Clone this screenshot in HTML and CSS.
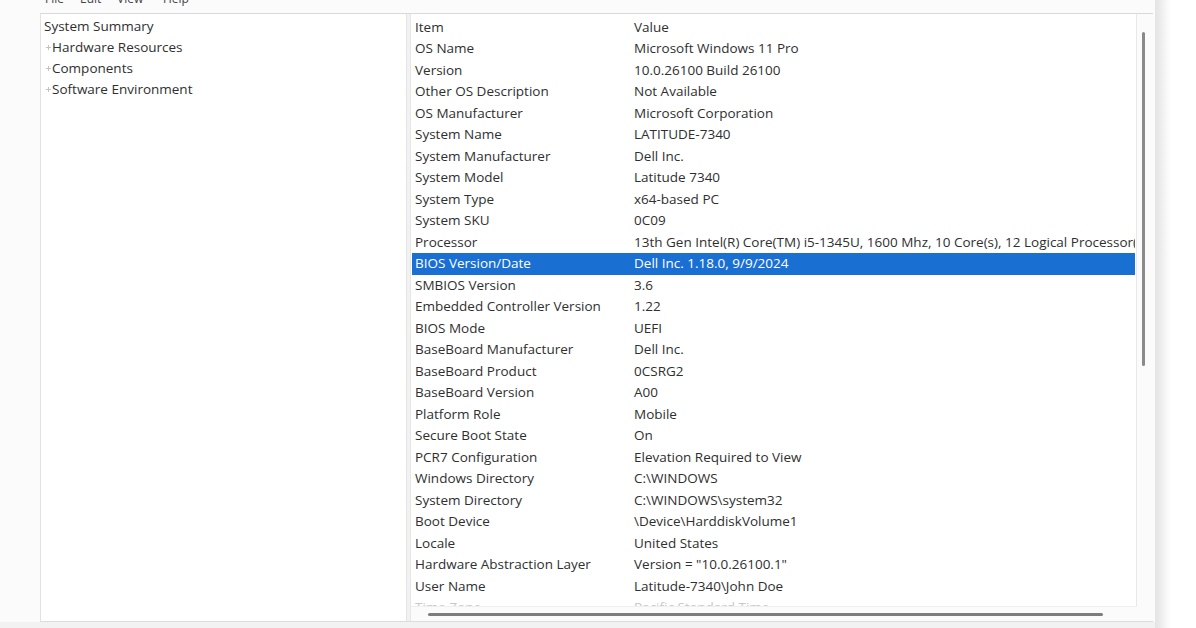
FILE: index.html
```html
<!DOCTYPE html>
<html>
<head>
<meta charset="utf-8">
<link rel="stylesheet" href="styles.css">
</head>
<body>
<div class="screen">
  <div class="window">
    <div class="menubar">
      <span class="menu m-file">File</span>
      <span class="menu m-edit">Edit</span>
      <span class="menu m-view">View</span>
      <span class="menu m-help">Help</span>
    </div>
    <div class="main">
      <div class="tree">
        <div class="node root">System Summary</div>
        <div class="node child"><span class="plus"></span>Hardware Resources</div>
        <div class="node child"><span class="plus"></span>Components</div>
        <div class="node child"><span class="plus"></span>Software Environment</div>
      </div>
      <div class="splitter"></div>
      <div class="list">
        <div class="rows">
          <div class="row"><span class="c1">Item</span><span class="c2">Value</span></div>
          <div class="row"><span class="c1">OS Name</span><span class="c2">Microsoft Windows 11 Pro</span></div>
          <div class="row"><span class="c1">Version</span><span class="c2">10.0.26100 Build 26100</span></div>
          <div class="row"><span class="c1">Other OS Description</span><span class="c2">Not Available</span></div>
          <div class="row"><span class="c1">OS Manufacturer</span><span class="c2">Microsoft Corporation</span></div>
          <div class="row"><span class="c1">System Name</span><span class="c2">LATITUDE-7340</span></div>
          <div class="row"><span class="c1">System Manufacturer</span><span class="c2">Dell Inc.</span></div>
          <div class="row"><span class="c1">System Model</span><span class="c2">Latitude 7340</span></div>
          <div class="row"><span class="c1">System Type</span><span class="c2">x64-based PC</span></div>
          <div class="row"><span class="c1">System SKU</span><span class="c2">0C09</span></div>
          <div class="row"><span class="c1">Processor</span><span class="c2">13th Gen Intel(R) Core(TM) i5-1345U, 1600 Mhz, 10 Core(s), 12 Logical Processor(s)</span></div>
          <div class="row selected"><span class="c1">BIOS Version/Date</span><span class="c2">Dell Inc. 1.18.0, 9/9/2024</span></div>
          <div class="row"><span class="c1">SMBIOS Version</span><span class="c2">3.6</span></div>
          <div class="row"><span class="c1">Embedded Controller Version</span><span class="c2">1.22</span></div>
          <div class="row"><span class="c1">BIOS Mode</span><span class="c2">UEFI</span></div>
          <div class="row"><span class="c1">BaseBoard Manufacturer</span><span class="c2">Dell Inc.</span></div>
          <div class="row"><span class="c1">BaseBoard Product</span><span class="c2">0CSRG2</span></div>
          <div class="row"><span class="c1">BaseBoard Version</span><span class="c2">A00</span></div>
          <div class="row"><span class="c1">Platform Role</span><span class="c2">Mobile</span></div>
          <div class="row"><span class="c1">Secure Boot State</span><span class="c2">On</span></div>
          <div class="row"><span class="c1">PCR7 Configuration</span><span class="c2">Elevation Required to View</span></div>
          <div class="row"><span class="c1">Windows Directory</span><span class="c2">C:\WINDOWS</span></div>
          <div class="row"><span class="c1">System Directory</span><span class="c2">C:\WINDOWS\system32</span></div>
          <div class="row"><span class="c1">Boot Device</span><span class="c2">\Device\HarddiskVolume1</span></div>
          <div class="row"><span class="c1">Locale</span><span class="c2">United States</span></div>
          <div class="row"><span class="c1">Hardware Abstraction Layer</span><span class="c2">Version = "10.0.26100.1"</span></div>
          <div class="row"><span class="c1">User Name</span><span class="c2">Latitude-7340\John Doe</span></div>
          <div class="row faint"><span class="c1">Time Zone</span><span class="c2">Pacific Standard Time</span></div>
        </div>
        <div class="vscroll"><div class="vthumb"></div></div>
        <div class="hscroll"><div class="hthumb"></div></div>
        <div class="corner"></div>
      </div>
    </div>
    <div class="statusbar"></div>
  </div>
  <div class="edge"></div>
</div>
</body>
</html>
```

FILE: styles.css
```css
html, body {
  margin: 0;
  padding: 0;
  background: #ffffff;
}
body {
  font-family: "Open Sans", "Noto Sans", "Liberation Sans", sans-serif;
  font-size: 13.5px;
  color: #2f2f2f;
  width: 1196px;
  height: 628px;
  overflow: hidden;
}
.screen {
  display: flex;
  height: 628px;
}
.window {
  width: 1155px;
  display: flex;
  flex-direction: column;
  background: #fbfbfb;
}
.edge {
  width: 16px;
  background: linear-gradient(to right, #e4e4e4, #ececec 35%, #f7f7f7 70%, #ffffff);
}
.menubar {
  height: 13px;
  overflow: hidden;
  display: flex;
  padding-left: 45px;
  font-size: 12px;
}
.menu {
  margin-top: -10px;
  line-height: 18px;
  color: #444;
}
.m-file { width: 35px; }
.m-edit { width: 37px; }
.m-view { width: 46px; }
.main {
  flex: 1;
  display: flex;
  margin-left: 40px;
  margin-right: 2px;
  border-top: 1px solid #d9d9d9;
  border-bottom: 1px solid #dcdcdc;
  background: #fff;
  min-height: 0;
}
.tree {
  width: 365px;
  border-left: 1px solid #e2e2e2;
  border-right: 1px solid #e4e4e4;
  padding-top: 1.5px;
  background: #fff;
}
.node {
  height: 21px;
  line-height: 21px;
  white-space: nowrap;
}
.root { padding-left: 3px; }
.child {
  padding-left: 5px;
  display: flex;
  align-items: center;
}
.plus {
  position: relative;
  width: 5px;
  height: 5px;
  margin-right: 1px;
}
.plus::before, .plus::after {
  content: "";
  position: absolute;
  background: #c2c2c2;
}
.plus::before { left: 0; top: 2px; width: 5px; height: 1px; }
.plus::after { left: 2px; top: 0; width: 1px; height: 5px; }
.splitter {
  width: 3px;
  background: #f2f2f2;
  border-right: 1px solid #e6e6e6;
}
.list {
  flex: 1;
  display: grid;
  grid-template-columns: 1fr 16px;
  grid-template-rows: 1fr 15px;
  min-width: 0;
  min-height: 0;
  background: #fff;
}
.rows {
  overflow: hidden;
  padding-top: 2.5px;
  padding-left: 1px;
  border-right: 1px solid #e8e8e8;
}
.row {
  display: flex;
  height: 21.5px;
  line-height: 21.5px;
  white-space: nowrap;
  margin-right: 1px;
}
.c1 {
  width: 216px;
  flex: none;
  padding-left: 3px;
}
.c2 {
  padding-left: 3px;
  overflow: hidden;
  flex: 1;
}
.row.selected {
  background: #1a6fd3;
  color: #ffffff;
}
.row.faint {
  color: #c8c8c8;
}
.vscroll {
  display: flex;
  padding-top: 18px;
  padding-left: 5px;
  background: #fbfbfb;
}
.vthumb {
  width: 3px;
  height: 334px;
  background: #8a8a8a;
  border-radius: 2px;
}
.hscroll {
  display: flex;
  align-items: center;
  padding-left: 17px;
  background: #fbfbfb;
  border-top: 1px solid #efefef;
}
.hthumb {
  width: 675px;
  height: 3px;
  background: #7d7d7d;
  border-radius: 2px;
}
.corner {
  background: #fbfbfb;
}
.statusbar {
  height: 6px;
  background: #f2f2f2;
}
```
